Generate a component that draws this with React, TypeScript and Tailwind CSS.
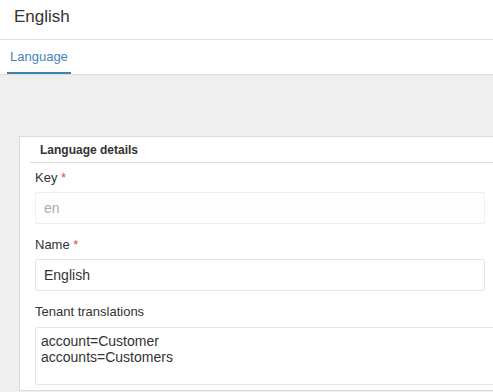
export default function App() {
  return (
    <div
      className="h-[392px] w-[493px] overflow-hidden bg-[#efefef] text-[#333]"
      style={{ fontFamily: '"Liberation Sans", Arial, sans-serif' }}
    >
      {/* page title */}
      <div className="h-[40px] border-b border-[#e3e3e3] bg-white pl-[14px] pt-[6px]">
        <h1 className="text-[17px] leading-[22px] text-[#333]">English</h1>
      </div>

      {/* tabs */}
      <div className="flex h-[35px] border-b border-[#dcdcdc] bg-white pl-[7px]">
        <div className="flex h-[34px] flex-col">
          <span className="px-[3px] pt-[9px] text-[13px] leading-[16px] text-[#4683c3]">Language</span>
          <span className="mt-auto h-[2px] w-[64px] bg-[#3b82ad]" />
        </div>
      </div>

      {/* card */}
      <div className="ml-[19px] mt-[61px] w-[520px] border border-[#dcdcdc] bg-white pb-[5px]">
        <div className="ml-[10px] h-[26px] border-b border-[#dcdcdc] pl-[10px] pt-[2px] text-[12px] font-bold leading-[22px] text-[#333]">
          Language details
        </div>

        <div className="flex flex-col pl-[15px] pt-[6px]">
          <label className="text-[13px] leading-[18px] text-[#333]">
            Key <span className="text-[#e24b4b]">*</span>
          </label>
          <input
            value="en"
            readOnly
            className="mt-[5px] h-[32px] w-[450px] rounded-[2px] border border-[#efefef] bg-[#fefefe] px-[8px] text-[14px] text-[#aaa] outline-none"
          />

          <label className="mt-[12px] text-[13px] leading-[18px] text-[#333]">
            Name <span className="text-[#e24b4b]">*</span>
          </label>
          <input
            value="English"
            readOnly
            className="mt-[5px] h-[32px] w-[450px] rounded-[2px] border border-[#e6e6e6] bg-white px-[8px] text-[14px] text-[#333] outline-none"
          />

          <label className="mt-[12px] text-[13px] leading-[18px] text-[#333]">Tenant translations</label>
          <textarea
            readOnly
            value={"account=Customer\naccounts=Customers"}
            className="mt-[6px] h-[58px] w-[480px] resize-none rounded-[2px] border border-[#e6e6e6] bg-white px-[5px] pt-[5px] text-[14px] leading-[16px] text-[#333] outline-none"
          />
        </div>
      </div>
    </div>
  );
}
